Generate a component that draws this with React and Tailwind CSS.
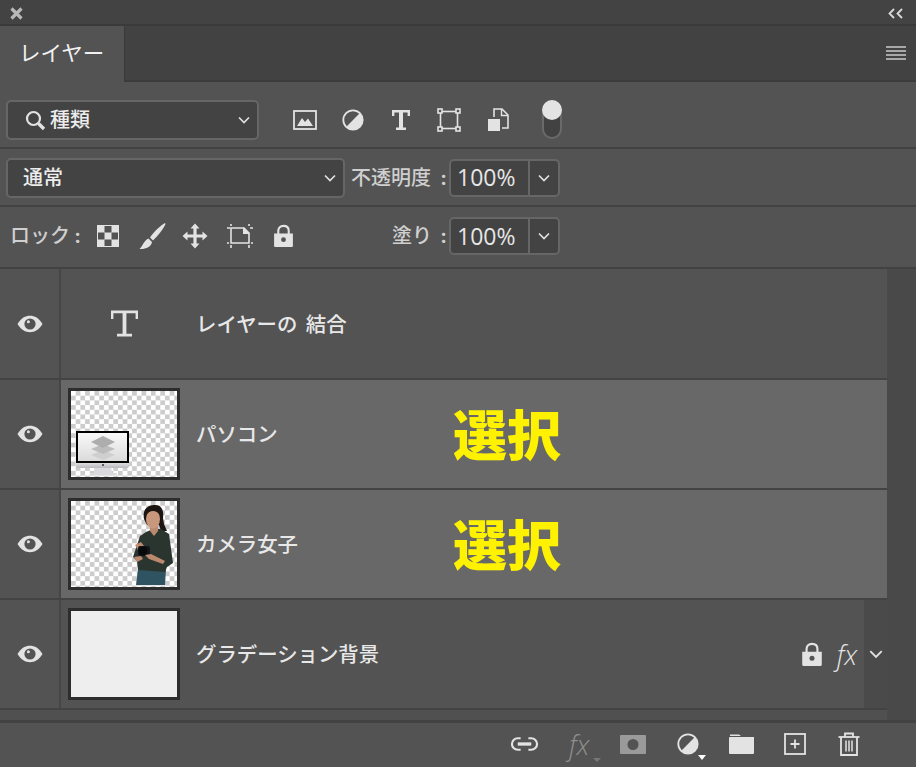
import React from "react";

const cjk = "font-['Inter','Noto_Sans_CJK_JP',sans-serif]";

function Chevron({ className = "w-[14px] h-[14px]" }) {
  return (
    <svg viewBox="0 0 14 14" className={className} fill="none" stroke="#e0e0e0" strokeWidth="1.7">
      <path d="M2 4.5 L7 9.5 L12 4.5" />
    </svg>
  );
}

function Eye() {
  return (
    <svg viewBox="0 0 26 18" className="w-[26px] h-[18px]">
      <path d="M0.5 9 C4 3 8.5 0.8 13 0.8 C17.5 0.8 22 3 25.5 9 C22 15 17.5 17.2 13 17.2 C8.5 17.2 4 15 0.5 9 Z" fill="#e3e3e3" />
      <circle cx="13" cy="9" r="5.6" fill="#535353" />
      <circle cx="11.4" cy="6.8" r="1.5" fill="#e3e3e3" />
    </svg>
  );
}

function Lock({ className = "w-[20px] h-[23px]" }) {
  return (
    <svg viewBox="0 0 20 23" className={className}>
      <path d="M5 10 V6.5 C5 3.5 7 1.8 10 1.8 C13 1.8 15 3.5 15 6.5 V10" fill="none" stroke="#e3e3e3" strokeWidth="2" />
      <path d="M1 9 H19 V21 Q19 22 18 22 H2 Q1 22 1 21 Z" fill="#e3e3e3" />
      <circle cx="10" cy="15" r="2.3" fill="#535353" />
    </svg>
  );
}

function SerifT({ className }) {
  return (
    <svg viewBox="0 0 20 22" className={className} fill="#e3e3e3">
      <path d="M1 1 H19 V7 H16.6 V3.6 H12 V18.6 H15 V21 H5 V18.6 H8 V3.6 H3.4 V7 H1 Z" />
    </svg>
  );
}

function HalfCircle({ className }) {
  return (
    <svg viewBox="0 0 22 22" className={className}>
      <circle cx="11" cy="11" r="9.7" fill="none" stroke="#e3e3e3" strokeWidth="1.8" />
      <path d="M17.9 4.1 A9.7 9.7 0 0 1 4.1 17.9 Z" fill="#e3e3e3" />
    </svg>
  );
}

function FilterIcons() {
  return (
    <div className="flex items-center">
      <svg viewBox="0 0 24 20" className="w-[24px] h-[20px] ml-[34px]">
        <rect x="1" y="1" width="22" height="18" fill="none" stroke="#e3e3e3" strokeWidth="1.8" />
        <path d="M4 16 L9 8 L12 12 L15 8.5 L20 16 Z" fill="#e3e3e3" />
      </svg>
      <HalfCircle className="w-[22px] h-[22px] ml-[25px]" />
      <SerifT className="w-[20px] h-[22px] ml-[27px]" />
      <svg viewBox="0 0 24 24" className="w-[24px] h-[24px] ml-[26px]" fill="none" stroke="#e3e3e3" strokeWidth="1.6">
        <rect x="3.5" y="3.5" width="17" height="17" />
        <rect x="1" y="1" width="4" height="4" fill="#535353" />
        <rect x="19" y="1" width="4" height="4" fill="#535353" />
        <rect x="1" y="19" width="4" height="4" fill="#535353" />
        <rect x="19" y="19" width="4" height="4" fill="#535353" />
      </svg>
      <svg viewBox="0 0 21 24" className="w-[21px] h-[24px] ml-[27px]">
        <path d="M6 9 V1 H14 L20 7 V20 H14" fill="none" stroke="#e3e3e3" strokeWidth="1.6" />
        <path d="M13.5 1 V7.5 H20" fill="none" stroke="#e3e3e3" strokeWidth="1.4" />
        <rect x="0" y="11" width="12" height="12" fill="#e3e3e3" />
      </svg>
      <div className="relative ml-[33px] w-[20px] h-[33px] mt-[5px] rounded-full border-2 border-[#6a6a6a] bg-[#424242]">
        <div className="absolute left-[-2px] top-[-8px] w-[20px] h-[20px] rounded-full bg-[#e3e3e3]" />
      </div>
    </div>
  );
}

function LockIcons() {
  return (
    <div className="flex items-center">
      <svg viewBox="0 0 22 22" className="w-[22px] h-[22px]">
        <rect width="22" height="22" fill="#e3e3e3" />
        <rect x="7.5" y="1" width="7" height="6.5" fill="#535353" />
        <rect x="1" y="7.5" width="6.5" height="7" fill="#535353" />
        <rect x="14.5" y="7.5" width="6.5" height="7" fill="#535353" />
        <rect x="7.5" y="14.5" width="7" height="6.5" fill="#535353" />
      </svg>
      <svg viewBox="0 0 27 28" className="w-[27px] h-[28px] ml-[20px]" fill="#e3e3e3">
        <path d="M26 1 C22 3 15 9.5 11 15.5 L14 18.5 C19 13.5 25 6 26.5 2 Z" />
        <path d="M9.5 16.5 L13 20 C12.5 25 6 27.5 0.5 27 C3.5 25 4 19 9.5 16.5 Z" />
      </svg>
      <svg viewBox="0 0 26 26" className="w-[26px] h-[26px] ml-[16px]" fill="#e3e3e3">
        <path d="M13 0.5 L17.5 5.5 H14.6 V11.4 H20.5 V8.5 L25.5 13 L20.5 17.5 V14.6 H14.6 V20.5 H17.5 L13 25.5 L8.5 20.5 H11.4 V14.6 H5.5 V17.5 L0.5 13 L5.5 8.5 V11.4 H11.4 V5.5 H8.5 Z" />
      </svg>
      <svg viewBox="0 0 28 24" className="w-[28px] h-[24px] ml-[18px]" fill="none" stroke="#e3e3e3">
        <path d="M5 4 H18 L23 9 V19 H5 Z" strokeWidth="1.6" />
        <path d="M17 3 L24 10 H17 Z" fill="#e3e3e3" stroke="none" />
        <path d="M1 4 H4 M24 4 H27 M1 19 H3 M25 19 H27 M5 0 V2 M23 0 V2 M5 21 V24 M23 21 V24" strokeWidth="1.6" />
      </svg>
      <Lock className="w-[21px] h-[24px] ml-[19px]" />
    </div>
  );
}

function Checker({ id }) {
  return (
    <>
      <defs>
        <pattern id={id} width="9.4" height="9.4" patternUnits="userSpaceOnUse">
          <rect width="9.4" height="9.4" fill="#ffffff" />
          <rect x="4.7" width="4.7" height="4.7" fill="#cccccc" />
          <rect y="4.7" width="4.7" height="4.7" fill="#cccccc" />
        </pattern>
      </defs>
      <rect width="106" height="86" fill={`url(#${id})`} />
    </>
  );
}

function PcThumb() {
  return (
    <svg viewBox="0 0 106 86" className="w-full h-full block">
      <defs>
        <linearGradient id="pc-screen" x1="0" y1="0" x2="0" y2="1">
          <stop offset="0" stopColor="#fafafa" />
          <stop offset="1" stopColor="#dadada" />
        </linearGradient>
        <linearGradient id="pc-chin" x1="0" y1="0" x2="0" y2="1">
          <stop offset="0" stopColor="#e4e4e8" />
          <stop offset="1" stopColor="#b9b9bf" />
        </linearGradient>
      </defs>
      <Checker id="chk-pc" />
      <path d="M24 76 H40 L41 82 H46 V84 H19 V82 H23 Z" fill="#d9d9de" />
      <path d="M5 71 H58 V75 Q58 77 55 77 H8 Q5 77 5 75 Z" fill="url(#pc-chin)" />
      <rect x="6" y="41" width="51" height="30" fill="url(#pc-screen)" stroke="#000" strokeWidth="2" />
      <path d="M32 59 L44 64 L32 69 L20 64 Z" fill="#cfcfcf" />
      <path d="M32 53 L44 58 L32 63 L20 58 Z" fill="#bdbdbd" />
      <path d="M32 45 L44 51 L32 57 L20 51 Z" fill="#adadad" />
      <circle cx="32" cy="74" r="1" fill="#333" />
    </svg>
  );
}

function PersonThumb() {
  return (
    <svg viewBox="0 0 106 86" className="w-full h-full block">
      <Checker id="chk-person" />
      {/* jeans */}
      <path d="M67 68 H95 L94 84 H65 Z" fill="#2f5360" />
      {/* hair + ponytail */}
      <path d="M73 18 C71 7 78 4 84 4 C91 4 93 10 92 17 L93 23 L96 30 L90 30 L88 24 L76 24 Z" fill="#1d1512" />
      {/* shirt */}
      <path d="M75 31 L82 28 L90 28 L98 33 L102 62 L96 66 L94 71 L67 69 L66 60 L62 56 L69 35 Z" fill="#2b3530" />
      <path d="M79 24 H87 L87 30 L83 35 L79 30 Z" fill="#bb8a6e" />
      {/* face */}
      <ellipse cx="82" cy="18" rx="7" ry="9.5" fill="#c9987c" />
      <path d="M75 15 C78 9 85 8 90 15 L90 8 L78 6 Z" fill="#1d1512" />
      {/* hands and camera */}
      <path d="M64 44 L70 41 L73 45 L67 49 Z" fill="#bb8a6e" />
      <rect x="67" y="45" width="12" height="10" rx="2" fill="#14161a" />
      <circle cx="72" cy="50" r="4.5" fill="#08090b" />
      <path d="M63 56 L70 55 L72 58 L66 61 Z" fill="#bb8a6e" />
      <path d="M74 54 L80 53 L94 60 L92 63 L78 58 Z" fill="#bb8a6e" />
    </svg>
  );
}

function Thumb({ children, className = "" }) {
  return (
    <div className={`w-[112px] h-[92px] border-[3px] border-[#2d2d2d] shrink-0 overflow-hidden ${className}`}>
      {children}
    </div>
  );
}

function Pick() {
  return (
    <span className="absolute left-[453px] top-1/2 -translate-y-1/2 -mt-px text-[54px] leading-none font-black text-[#fff200] font-['Noto_Sans_CJK_JP',sans-serif]">
      選択
    </span>
  );
}

function LayerRow({ label, selected, thumb, pick, right }) {
  return (
    <div className="relative flex h-[110px] border-b-2 border-[#434343] first:h-[111px]">
      <div className="w-[59px] shrink-0 flex items-center justify-center bg-[#535353]">
        <Eye />
      </div>
      <div className="w-[2px] shrink-0 bg-[#464646]" />
      <div className={`flex-1 flex items-center pl-[7px] ${selected ? "bg-[#686868]" : "bg-[#535353]"}`}>
        {thumb}
        <span className="ml-[16px] mt-[2px] text-[20.4px] leading-[28px] font-medium text-[#e8e8e8] [word-spacing:3px]">{label}</span>
      </div>
      {right}
      {pick && <Pick />}
    </div>
  );
}

function Percent() {
  return (
    <div className="flex w-[111px] h-[38px] rounded-[5px] border-2 border-[#666666] bg-[#434343]">
      <div className="w-[79px] flex items-center pl-[6px] border-r-2 border-[#666666] text-[23px] text-[#e6e6e6] font-['Open_Sans','Noto_Sans_CJK_JP',sans-serif]">100%</div>
      <div className="flex-1 flex items-center justify-center"><Chevron /></div>
    </div>
  );
}

function Label({ children, className = "" }) {
  return (
    <span className={`flex justify-between text-[20px] font-medium text-[#cfcfcf] whitespace-nowrap ${className}`}>
      <span>{children}</span>
      <span className="font-bold pr-[2px]">:</span>
    </span>
  );
}

export default function App() {
  return (
    <div className={`w-[916px] h-[767px] overflow-hidden bg-[#535353] flex flex-col ${cjk}`}>
      {/* title bar */}
      <div className="h-[26px] pt-[3px] bg-[#434343] border-b-2 border-[#3a3a3a] flex items-center justify-between pl-[10px] pr-[13px]">
        <svg viewBox="0 0 13 13" className="w-[13px] h-[13px]" stroke="#b8b8b8" strokeWidth="3.2">
          <path d="M1.5 1.5 L11.5 11.5 M11.5 1.5 L1.5 11.5" />
        </svg>
        <svg viewBox="0 0 15 11" className="w-[15px] h-[11px]" fill="none" stroke="#d8d8d8" strokeWidth="1.8">
          <path d="M6 1 L1.5 5.5 L6 10 M14 1 L9.5 5.5 L14 10" />
        </svg>
      </div>
      {/* tabs */}
      <div className="h-[56px] bg-[#424242] flex items-stretch border-b-2 border-[#3c3c3c]">
        <div className="w-[125px] -mb-[2px] bg-[#535353] border-r border-[#3a3a3a] pl-[19px] pt-[12px] text-[21.5px] leading-[30px] text-[#f0f0f0]">レイヤー</div>
        <div className="flex-1 flex items-center justify-end pr-[10px]">
          <div className="w-[20px] flex flex-col gap-[2px]">
            <div className="h-[2px] bg-[#a8a8a8]" />
            <div className="h-[2px] bg-[#a8a8a8]" />
            <div className="h-[2px] bg-[#a8a8a8]" />
            <div className="h-[2px] bg-[#a8a8a8]" />
          </div>
        </div>
      </div>
      {/* filter */}
      <div className="h-[67px] flex items-center pl-[6px] pt-[11px] border-b-2 border-[#424242]">
        <div className="w-[253px] h-[40px] rounded-[5px] border-2 border-[#666666] bg-[#434343] flex items-center pl-[17px] pr-[6px]">
          <svg viewBox="0 0 21 21" className="w-[21px] h-[21px]" fill="none" stroke="#e3e3e3">
            <circle cx="8.5" cy="8.5" r="6.5" strokeWidth="2.2" />
            <path d="M13.5 13.5 L19 19" strokeWidth="3.4" />
          </svg>
          <span className="ml-[4px] text-[20px] font-medium text-[#ececec]">種類</span>
          <Chevron className="w-[14px] h-[14px] ml-auto" />
        </div>
        <FilterIcons />
      </div>
      {/* blend */}
      <div className="h-[58px] flex items-center pl-[6px] pt-[1px] border-b-2 border-[#424242]">
        <div className="w-[339px] h-[40px] rounded-[5px] border-2 border-[#666666] bg-[#434343] flex items-center pl-[15px] pr-[6px]">
          <span className="text-[20px] font-medium text-[#ececec]">通常</span>
          <Chevron className="w-[14px] h-[14px] ml-auto" />
        </div>
        <Label className="ml-[6px] w-[98px]">不透明度</Label>
        <Percent />
      </div>
      {/* lock */}
      <div className="h-[62px] flex items-center pl-[10px] pb-[2px] border-b-2 border-[#424242]">
        <Label className="w-[87px] pr-[14px]">ロック</Label>
        <LockIcons />
        <Label className="ml-[98px] w-[57px]">塗り</Label>
        <Percent />
      </div>
      {/* layers */}
      <div className="flex flex-1 min-h-0">
        <div className="flex-1 flex flex-col">
          <LayerRow
            label="レイヤーの 結合"
            thumb={
              <div className="w-[112px] flex justify-center">
                <svg viewBox="0 0 27 27" className="w-[27px] h-[27px]" fill="#e3e3e3">
                  <path d="M0 0.5 H27 V9 H24.6 V3.2 H15.4 V23.8 H21 V26.5 H6 V23.8 H11.6 V3.2 H2.4 V9 H0 Z" />
                </svg>
              </div>
            }
          />
          <LayerRow selected pick label="パソコン" thumb={<Thumb><PcThumb /></Thumb>} />
          <LayerRow selected pick label="カメラ女子" thumb={<Thumb><PersonThumb /></Thumb>} />
          <LayerRow
            label="グラデーション背景"
            thumb={<Thumb className="bg-[#eeeeee]" />}
            right={
              <div className="absolute right-0 top-0 bottom-0 flex items-stretch">
                <div className="flex items-center">
                  <Lock className="w-[22px] h-[25px]" />
                  <span className="ml-[14px] mr-[7px] font-['Open_Sans',sans-serif] font-light italic text-[27px] leading-none text-[#e3e3e3]">fx</span>
                </div>
                <div className="w-[23px] bg-[#4a4a4a] flex items-center justify-center">
                  <Chevron className="w-[16px] h-[16px]" />
                </div>
              </div>
            }
          />
          <div className="flex-1 bg-[#505050]" />
        </div>
        <div className="w-[29px] bg-[#494949]" />
      </div>
      {/* footer */}
      <div className="h-[47px] shrink-0 border-t-[3px] border-[#424242] bg-[#535353] flex items-center justify-end pr-[56px] pb-[2px]">
        <svg viewBox="0 0 30 16" className="w-[29px] h-[16px]" fill="none" stroke="#e3e3e3" strokeWidth="2.2">
          <path d="M11 2 H8 A6 6 0 0 0 8 14 H11 M19 2 H22 A6 6 0 0 1 22 14 H19" />
          <path d="M8 8 H22" strokeWidth="3.4" />
        </svg>
        <span className="relative ml-[30px] w-[24px] font-['Open_Sans',sans-serif] font-light italic text-[27px] leading-none text-[#8f8f8f]">
          fx
          <span className="absolute right-[-8px] bottom-[-4px] w-0 h-0 border-l-4 border-r-4 border-t-[4px] border-l-transparent border-r-transparent border-t-[#777777]" />
        </span>
        <svg viewBox="0 0 26 19" className="w-[26px] h-[19px] ml-[27px]">
          <rect width="26" height="19" rx="1" fill="#9a9a9a" />
          <circle cx="13" cy="9.5" r="5.5" fill="#535353" />
        </svg>
        <div className="relative ml-[31px]">
          <HalfCircle className="w-[22px] h-[22px]" />
          <div className="absolute right-[-7px] bottom-[-5px] w-0 h-0 border-l-4 border-r-4 border-t-[5px] border-l-transparent border-r-transparent border-t-white" />
        </div>
        <svg viewBox="0 0 25 20" className="w-[25px] h-[20px] ml-[30px]" fill="#e3e3e3">
          <path d="M0 4 Q0 3 1 3 H25 V19 Q25 20 24 20 H1 Q0 20 0 19 Z" />
          <path d="M1 0.5 H10 L12 2 H1 Z" />
        </svg>
        <svg viewBox="0 0 22 22" className="w-[22px] h-[22px] ml-[30px]" fill="none" stroke="#e3e3e3">
          <rect x="1" y="1" width="20" height="20" strokeWidth="1.8" />
          <path d="M11 6.5 V15.5 M6.5 11 H15.5" strokeWidth="1.8" />
        </svg>
        <svg viewBox="0 0 22 24" className="w-[22px] h-[24px] ml-[32px]" fill="none" stroke="#e3e3e3" strokeWidth="1.8">
          <path d="M0.5 5 H21.5" />
          <path d="M7 5 V1.5 H15 V5" />
          <path d="M3 5 V23 H19 V5" />
          <path d="M8 8.5 V19.5 M11 8.5 V19.5 M14 8.5 V19.5" strokeWidth="1.5" />
        </svg>
      </div>
    </div>
  );
}
